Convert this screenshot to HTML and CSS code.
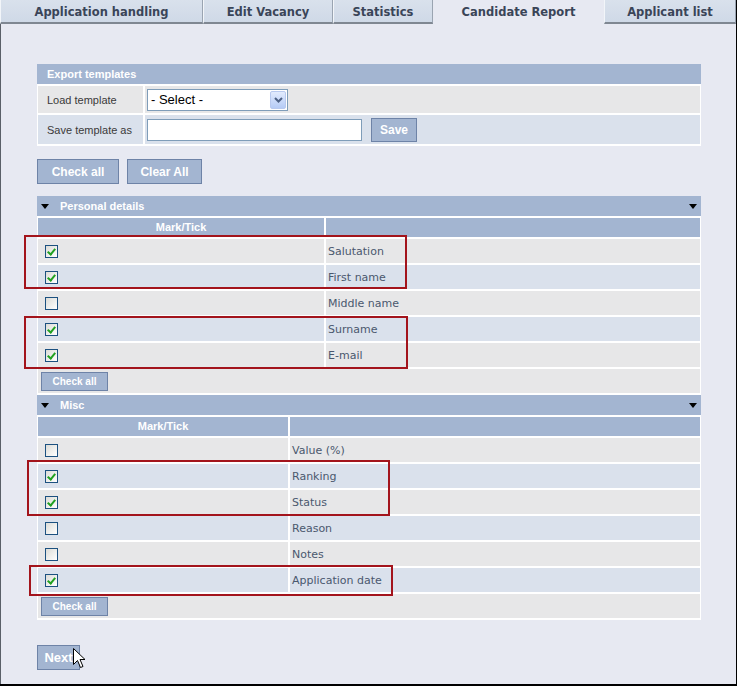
FILE: index.html
```html
<!DOCTYPE html>
<html>
<head>
<meta charset="utf-8">
<title>Candidate Report</title>
<link rel="stylesheet" href="styles.css">
</head>
<body>
<div class="frame">
  <div class="tabs">
    <div class="tab">Application handling</div>
    <div class="tab">Edit Vacancy</div>
    <div class="tab">Statistics</div>
    <div class="tab active">Candidate Report</div>
    <div class="tab">Applicant list</div>
  </div>
  <div class="content">
    <div class="box">
      <div class="box-head">Export templates</div>
      <div class="form-grid">
        <div class="lbl gray">Load template</div>
        <div class="fld gray">
          <div class="select"><span class="sel-text">- Select -</span><span class="sel-arrow"><svg width="9" height="6" viewBox="0 0 9 6"><path d="M1 1 L4.5 4.5 L8 1" fill="none" stroke="#4d6185" stroke-width="2"/></svg></span></div>
        </div>
        <div class="lbl blue tall">Save template as</div>
        <div class="fld blue tall">
          <div class="textinput"></div>
          <button class="btn save">Save</button>
        </div>
      </div>
    </div>

    <div class="btn-row">
      <button class="btn big w82">Check all</button>
      <button class="btn big w75">Clear All</button>
    </div>

    <div class="section">
      <div class="sec-head"><span class="tri"></span><span class="sec-title">Personal details</span><span class="tri right"></span></div>
      <div class="grid personal">
        <div class="col-head">Mark/Tick</div><div class="col-head"></div>
        <div class="cell gray"><span class="cb on"></span></div><div class="cell gray txt">Salutation</div>
        <div class="cell blue"><span class="cb on"></span></div><div class="cell blue txt">First name</div>
        <div class="cell gray"><span class="cb"></span></div><div class="cell gray txt">Middle name</div>
        <div class="cell blue"><span class="cb on"></span></div><div class="cell blue txt">Surname</div>
        <div class="cell gray"><span class="cb on"></span></div><div class="cell gray txt">E-mail</div>
        <div class="cell gray span2"><button class="btn small">Check all</button></div>
      </div>
    </div>

    <div class="section">
      <div class="sec-head"><span class="tri"></span><span class="sec-title">Misc</span><span class="tri right"></span></div>
      <div class="grid misc">
        <div class="col-head">Mark/Tick</div><div class="col-head"></div>
        <div class="cell gray"><span class="cb"></span></div><div class="cell gray txt">Value (%)</div>
        <div class="cell blue"><span class="cb on"></span></div><div class="cell blue txt">Ranking</div>
        <div class="cell gray"><span class="cb on"></span></div><div class="cell gray txt">Status</div>
        <div class="cell blue"><span class="cb"></span></div><div class="cell blue txt">Reason</div>
        <div class="cell gray"><span class="cb"></span></div><div class="cell gray txt">Notes</div>
        <div class="cell blue"><span class="cb on"></span></div><div class="cell blue txt">Application date</div>
        <div class="cell gray span2"><button class="btn small">Check all</button></div>
      </div>
    </div>

    <button class="btn next">Next</button>
  </div>

  <div class="mark m1"></div>
  <div class="mark m2"></div>
  <div class="mark m3"></div>
  <div class="mark m4"></div>

  <svg class="cursor" width="13" height="21" viewBox="0 0 13 21">
    <path d="M0.5 0.5 L0.5 16.5 L4.5 12.5 L7.5 19.5 L10 18.5 L7 11.5 L12 11.5 Z" fill="#fff" stroke="#000" stroke-width="1" stroke-linejoin="miter"/>
  </svg>
</div>
</body>
</html>
```

FILE: styles.css
```css
* { box-sizing: border-box; }

html, body {
  margin: 0;
  padding: 0;
  background: #e7e9f2;
}

.frame {
  position: relative;
  width: 737px;
  height: 686px;
  background: #e7e9f2;
  border-right: 1px solid #000;
  border-bottom: 2px solid #000;
  display: flex;
  flex-direction: column;
  font-family: "Liberation Sans", Arial, sans-serif;
}

/* Tabs */
.tabs {
  display: grid;
  grid-template-columns: 203px 130px 100px 171px 132px;
  height: 24px;
}

.tab {
  height: 24px;
  display: flex;
  align-items: center;
  justify-content: center;
  padding-top: 2px;
  background: linear-gradient(#d9e1ec, #cfd9e7);
  border-bottom: 2px solid #7f8792;
  border-left: 1px solid #f2f5f9;
  border-right: 1px solid #9aa4b1;
  font-family: "DejaVu Sans", Verdana, sans-serif;
  font-weight: bold;
  font-size: 11.5px;
  color: #3a4558;
}

.tab.active {
  background: #e7e9f2;
  border-bottom: none;
  border-left: none;
  border-right: none;
  padding-top: 0;
}

/* Content */
.content {
  flex: 1;
  border-left: 1px solid #5a5f68;
  padding: 40px 0 0 36px;
  width: 700px;
}

.content > * { width: 664px; }

/* Export templates box */
.box {
  background: #fff;
  padding: 0 1px 2px 1px;
}

.box-head {
  height: 20px;
  margin: 0 -1px;
  background: #a3b5d1;
  color: #fff;
  font-weight: bold;
  font-size: 11px;
  line-height: 20px;
  padding-left: 10px;
}

.form-grid {
  display: grid;
  grid-template-columns: 105px 1fr;
  gap: 2px;
  margin-top: 2px;
}

.gray { background: #e7e7e8; }
.blue { background: #dae1ec; }

.lbl {
  height: 27px;
  display: flex;
  align-items: center;
  padding-left: 9px;
  font-size: 11px;
  color: #3a3a3a;
}

.fld {
  height: 27px;
  display: flex;
  align-items: center;
  padding-left: 2px;
}

.tall { height: 29px; }

.select {
  width: 141px;
  height: 22px;
  background: #fff;
  border: 1px solid #7f9db9;
  display: flex;
  align-items: center;
  justify-content: space-between;
  padding: 1px;
}

.sel-text {
  font-size: 13px;
  color: #000;
  padding-left: 2px;
}

.sel-arrow {
  width: 16px;
  height: 18px;
  border: 1px solid #b8c9ef;
  border-radius: 2px;
  background: linear-gradient(#e2ebfd, #b5cbf6);
  display: flex;
  align-items: center;
  justify-content: center;
}

.textinput {
  width: 215px;
  height: 22px;
  background: #fff;
  border: 1px solid #7f9db9;
}

/* Buttons */
.btn {
  background: #a3b5d1;
  border: 1px solid #6e83a7;
  color: #fff;
  font-family: "Liberation Sans", Arial, sans-serif;
  font-weight: bold;
  font-size: 12px;
  padding: 0;
  margin: 0;
  cursor: pointer;
}

.save {
  width: 46px;
  height: 24px;
  margin-left: 9px;
}

.btn-row {
  display: flex;
  gap: 8px;
  margin-top: 13px;
}

.big { height: 25px; }
.w82 { width: 82px; }
.w75 { width: 75px; }

/* Sections */
.section {
  background: #fff;
  padding: 0 1px 2px 1px;
  margin-top: 12px;
}

.section + .section { margin-top: 0; }

.sec-head {
  height: 20px;
  margin: 0 -1px;
  background: #a3b5d1;
  display: flex;
  align-items: center;
  padding: 0 4px;
}

.tri {
  width: 0;
  height: 0;
  border-left: 4px solid transparent;
  border-right: 4px solid transparent;
  border-top: 5px solid #000;
}

.sec-title {
  flex: 1;
  color: #fff;
  font-weight: bold;
  font-size: 11px;
  padding-left: 11px;
}

.grid {
  display: grid;
  gap: 2px;
  margin-top: 2px;
  grid-template-rows: 19px;
  grid-auto-rows: 24px;
}

.personal { grid-template-columns: 286px 1fr; }
.misc { grid-template-columns: 250px 1fr; }

.col-head {
  background: #a3b5d1;
  color: #fff;
  font-weight: bold;
  font-size: 11px;
  text-align: center;
  line-height: 18px;
}

.cell {
  display: flex;
  align-items: center;
  padding-left: 7px;
}

.txt {
  padding-left: 2px;
  font-family: "DejaVu Sans", Verdana, sans-serif;
  font-size: 11px;
  color: #4a586e;
}

.span2 {
  grid-column: 1 / span 2;
  padding-left: 3px;
}

.small {
  width: 67px;
  height: 19px;
  font-size: 10px;
}

/* Checkboxes */
.cb {
  display: inline-block;
  width: 13px;
  height: 13px;
  border: 1px solid #1c5180;
  background: linear-gradient(135deg, #dcdcd7, #ffffff);
  position: relative;
}

.cb.on::after {
  content: "";
  position: absolute;
  left: 3px;
  top: 1px;
  width: 3px;
  height: 6px;
  border-right: 2px solid #21a121;
  border-bottom: 2px solid #21a121;
  transform: rotate(40deg);
}

.content > .next {
  width: 43px;
  height: 25px;
  font-size: 13px;
  margin-top: 25px;
}

/* Annotation overlays */
.mark {
  position: absolute;
  border: 2px solid #a3141c;
}

.m1 { left: 24px; top: 235px; width: 383px; height: 54px; }
.m2 { left: 24px; top: 316px; width: 384px; height: 53px; }
.m3 { left: 27px; top: 460px; width: 363px; height: 56px; }
.m4 { left: 29px; top: 565px; width: 364px; height: 31px; }

.cursor {
  position: absolute;
  left: 73px;
  top: 648px;
}
```
